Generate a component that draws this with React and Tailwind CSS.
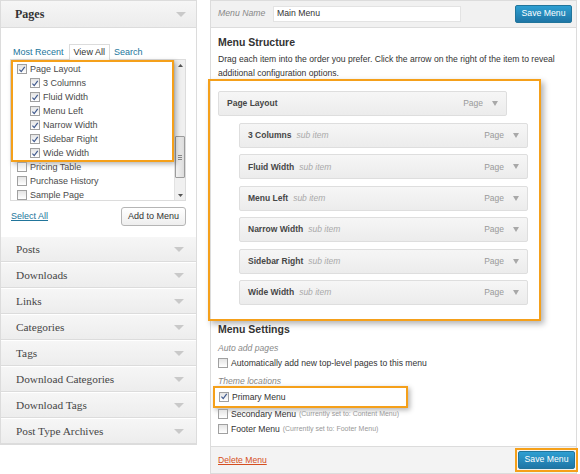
import React from "react";

const ORANGE = "border-[#f5a01a]";

function Check({ checked }) {
  return (
    <span className="inline-flex w-[10px] h-[10px] shrink-0 items-center justify-center border border-[#a0a0a0] bg-gradient-to-b from-[#e4e4e4] to-white">
      {checked && (
        <svg viewBox="0 0 10 10" className="w-[9px] h-[9px]">
          <path d="M1.8 5.2 L4 7.6 L8.4 1.6" stroke="#415b8f" strokeWidth="1.5" fill="none" />
        </svg>
      )}
    </span>
  );
}

function Tri({ className = "" }) {
  return (
    <svg viewBox="0 0 10 5" className={"w-[10px] h-[5px] " + className}>
      <path d="M0 0 L10 0 L5 5 Z" fill="#c9c9c9" />
    </svg>
  );
}

function SmallTri() {
  return (
    <svg viewBox="0 0 6 5" className="w-[6px] h-[5px]">
      <path d="M0 0 L6 0 L3 5 Z" fill="#a8a8a8" />
    </svg>
  );
}

function ListItem({ label, checked, indent }) {
  return (
    <div className={"flex items-center h-[14px] gap-[3px] " + (indent ? "pl-[19px]" : "pl-[6px]")}>
      <Check checked={checked} />
      <span className="text-[9px] text-[#4a4a4a] leading-none">{label}</span>
    </div>
  );
}

function AccRow({ label }) {
  return (
    <div className="h-[26px] flex items-center justify-between pl-[15px] pr-[12px] bg-gradient-to-b from-[#f6f6f6] to-[#ededed] border-t border-t-white border-b border-b-[#dcdcdc]">
      <span className="font-['Liberation_Serif',serif] text-[11.3px] text-[#464646]">{label}</span>
      <Tri />
    </div>
  );
}

function MenuItem({ title, sub }) {
  return (
    <div className={"h-[25px] w-[289px] flex items-center justify-between pl-[8px] pr-[8px] border border-[#dedede] rounded-[2px] bg-gradient-to-b from-[#f6f6f6] to-[#ececec] " + (sub ? "ml-[21px]" : "")}>
      <div className="flex items-center gap-[5px]">
        <span className="text-[8.5px] font-bold text-[#464646]">{title}</span>
        {sub && <span className="text-[8.5px] italic text-[#aaa]">sub item</span>}
      </div>
      <div className="flex items-center gap-[9px]">
        <span className="text-[8.5px] text-[#999]">Page</span>
        <SmallTri />
      </div>
    </div>
  );
}

export default function App() {
  const subs = ["3 Columns", "Fluid Width", "Menu Left", "Narrow Width", "Sidebar Right", "Wide Width"];
  return (
    <div className="w-[580px] h-[474px] bg-white flex gap-[13px] overflow-hidden font-['Liberation_Sans',Arial,sans-serif]">
      {/* Left column */}
      <div className="w-[197px] flex flex-col">
        <div className="border border-[#dcdcdc] flex flex-col">
          <div className="h-[27px] flex items-center justify-between pl-[14px] pr-[10px] bg-gradient-to-b from-[#f6f6f6] to-[#ececec] border-b border-[#dcdcdc]">
            <span className="font-['Liberation_Serif',serif] text-[12px] font-bold text-[#333]">Pages</span>
            <Tri />
          </div>
          <div className="bg-white pt-[15px] pl-[9px] pr-[10px] pb-[10px]">
            <div className="flex items-end h-[16px] text-[9px]">
              <span className="text-[#21759b] pl-[3px] pr-[5px] leading-[14px]">Most Recent</span>
              <span className="h-[16px] px-[4px] flex items-center border border-b-0 border-[#dcdcdc] text-[#333] bg-white relative top-[1px]">View All</span>
              <span className="text-[#21759b] pl-[4px] leading-[14px]">Search</span>
            </div>
            <div className="h-[142px] border border-[#dcdcdc] flex">
              <div className="flex-1 relative">
                <div className={"absolute left-0 top-0 w-[163px] h-[102px] border-2 " + ORANGE + " shadow-[2px_2px_5px_rgba(0,0,0,0.3)]"} />
                <div className="pt-[2px] relative">
                  <ListItem label="Page Layout" checked />
                  {subs.map((s) => (
                    <ListItem key={s} label={s} checked indent />
                  ))}
                  <ListItem label="Pricing Table" />
                  <ListItem label="Purchase History" />
                  <ListItem label="Sample Page" />
                </div>
              </div>
              <div className="w-[11px] bg-[#f0f0f0] border-l border-[#e2e2e2] flex flex-col items-center">
                <div className="h-[10px] flex items-center">
                  <svg viewBox="0 0 5 3" className="w-[5px] h-[3px]"><path d="M0 3 L5 3 L2.5 0 Z" fill="#555" /></svg>
                </div>
                <div className="flex-1" />
                <div className="w-[10px] h-[42px] border border-[#9c9c9c] rounded-[1px] bg-gradient-to-r from-[#f2f2f2] to-[#dcdcdc] flex items-center justify-center">
                  <div className="flex flex-col gap-[1px]">
                    <div className="w-[4px] h-[1px] bg-[#888]" />
                    <div className="w-[4px] h-[1px] bg-[#888]" />
                    <div className="w-[4px] h-[1px] bg-[#888]" />
                  </div>
                </div>
                <div className="h-[12px]" />
                <div className="h-[10px] flex items-center">
                  <svg viewBox="0 0 5 3" className="w-[5px] h-[3px]"><path d="M0 0 L5 0 L2.5 3 Z" fill="#555" /></svg>
                </div>
              </div>
            </div>
            <div className="flex items-center justify-between mt-[6px] h-[19px]">
              <span className="text-[9px] text-[#21759b] underline decoration-[#21759b] pl-[1px]">Select All</span>
              <span className="h-[19px] px-[6px] flex items-center border border-[#b5b5b5] rounded-[3px] bg-gradient-to-b from-white to-[#eeeeee] text-[9px] text-[#333]">Add to Menu</span>
            </div>
          </div>
          {["Posts", "Downloads", "Links", "Categories", "Tags", "Download Categories", "Download Tags", "Post Type Archives"].map((l) => (
            <AccRow key={l} label={l} />
          ))}
        </div>
      </div>

      {/* Right column */}
      <div className="w-[367px] h-[474px] border border-[#dcdcdc] flex flex-col">
        <div className="h-[27px] shrink-0 flex items-center justify-between pl-[7px] pr-[4px] bg-[#f1f1f1] border-b border-[#dcdcdc]">
          <div className="flex items-center">
            <span className="text-[8.7px] italic text-[#888] w-[55px]">Menu Name</span>
            <div className="w-[188px] h-[16px] bg-white border border-[#e3e3e3] flex items-center pl-[3px] text-[8.7px] text-[#333]">Main Menu</div>
          </div>
          <span className="w-[57px] h-[18px] flex items-center justify-center rounded-[2px] border border-[#21759b] bg-gradient-to-b from-[#2e9fd2] to-[#1f76a6] text-[8.7px] text-white">Save Menu</span>
        </div>
        <div className="flex-1 flex flex-col pl-[7px]">
          <div className="mt-[7px] text-[10.5px] font-bold text-[#333] leading-[14px]">Menu Structure</div>
          <div className="mt-[3px] text-[8.6px] text-[#333] leading-[14px] w-[345px]">
            Drag each item into the order you prefer. Click the arrow on the right of the item to reveal additional configuration options.
          </div>
          <div className={"mt-[-1px] ml-[-10px] w-[333px] border-2 " + ORANGE + " pt-[10px] pb-[14px] pl-[8px] flex flex-col shadow-[3px_3px_6px_rgba(0,0,0,0.3)]"}>
            <MenuItem title="Page Layout" />
            <div className="flex flex-col gap-[6.4px] mt-[7px]">
              {subs.map((s) => (
                <MenuItem key={s} title={s} sub />
              ))}
            </div>
          </div>
          <div className="mt-[1px] text-[10.5px] font-bold text-[#333] leading-[14px]">Menu Settings</div>
          <div className="mt-[6px] text-[8.6px] italic text-[#888] leading-[12px]">Auto add pages</div>
          <div className="mt-[3px] flex items-center gap-[3px] h-[12px]">
            <Check />
            <span className="text-[8.6px] text-[#333]">Automatically add new top-level pages to this menu</span>
          </div>
          <div className="mt-[6px] text-[8.6px] italic text-[#888] leading-[12px]">Theme locations</div>
          <div className={"mt-[-1px] ml-[-5px] w-[195px] h-[22px] border-2 " + ORANGE + " flex items-center gap-[3px] pl-[4px] shadow-[2px_2px_5px_rgba(0,0,0,0.3)]"}>
            <Check checked />
            <span className="text-[8.6px] text-[#333]">Primary Menu</span>
          </div>
          <div className="mt-[0px] flex items-center gap-[3px] h-[12px]">
            <Check />
            <span className="text-[8.6px] text-[#333]">Secondary Menu</span>
            <span className="text-[7px] text-[#999]">(Currently set to: Content Menu)</span>
          </div>
          <div className="mt-[3px] flex items-center gap-[3px] h-[12px]">
            <Check />
            <span className="text-[8.6px] text-[#333]">Footer Menu</span>
            <span className="text-[7px] text-[#999]">(Currently set to: Footer Menu)</span>
          </div>
        </div>
        <div className="h-[27px] shrink-0 bg-[#f3f3f3] border-t border-[#dcdcdc] flex items-center justify-between pl-[7px]">
          <span className="text-[8.6px] text-[#d54e21] underline">Delete Menu</span>
          <div className={"mr-[-2px] border-2 " + ORANGE + " p-[1px]"}>
            <span className="w-[57px] h-[18px] flex items-center justify-center rounded-[2px] border border-[#21759b] bg-gradient-to-b from-[#2e9fd2] to-[#1f76a6] text-[8.7px] text-white">Save Menu</span>
          </div>
        </div>
      </div>
    </div>
  );
}
